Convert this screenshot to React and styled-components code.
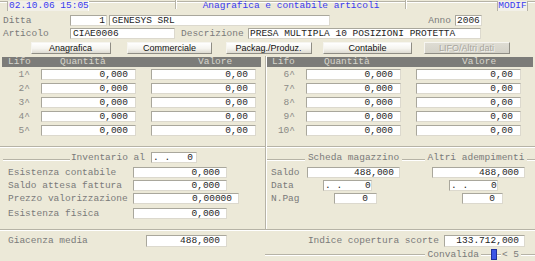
import React from 'react';
import styled, { createGlobalStyle } from 'styled-components';

const MONO = `"Liberation Mono", "DejaVu Sans Mono", monospace`;
const BLUE = '#3a3aef';
const ETCH_D = '#b6b3a6';
const ETCH_L = '#ffffff';

const Global = createGlobalStyle`
  html, body { margin: 0; padding: 0; background: #ece9d8; }
  #root { width: 535px; height: 261px; overflow: hidden; }
`;

const Screen = styled.div`
  width: 535px;
  height: 261px;
  background: #ece9d8;
  font-family: ${MONO};
  font-size: 9.5px;
  line-height: 1;
  color: #7a7a7a;
  display: flex;
  flex-direction: column;
  overflow: hidden;
`;

/* ---------- top strip ---------- */
const TopBar = styled.div`
  height: 14px;
  flex: none;
  display: flex;
  align-items: flex-start;
  background: linear-gradient(
    to bottom,
    transparent 0 1px,
    ${ETCH_D} 1px 2px,
    ${ETCH_L} 2px 3px,
    transparent 3px
  );
`;

const DateTag = styled.div`
  margin-left: 7px;
  margin-top: 1px;
  width: 82px;
  height: 10px;
  box-sizing: border-box;
  border-left: 1px solid ${ETCH_D};
  border-right: 1px solid ${ETCH_L};
  background: #f2f0e8;
  color: ${BLUE};
  padding-left: 1px;
  line-height: 10px;
  white-space: pre;
`;

const Tick = styled.div`
  flex: none;
  margin-left: ${p => p.$ml}px;
  width: 1px;
  height: 9px;
  background: ${ETCH_D};
  border-right: 1px solid ${ETCH_L};
`;

const Title = styled.div`
  flex: none;
  width: 228px;
  margin-top: 1px;
  text-align: center;
  color: ${BLUE};
  line-height: 10px;
  white-space: pre;
`;

const ModeTag = styled.div`
  flex: none;
  margin-left: 90px;
  margin-top: 1px;
  width: 31px;
  height: 10px;
  box-sizing: border-box;
  border-left: 1px solid ${ETCH_D};
  border-right: 1px solid ${ETCH_D};
  background: #f2f0e8;
  color: ${BLUE};
  text-align: center;
  line-height: 10px;
`;

/* ---------- fields ---------- */
const FieldRow = styled.div`
  height: 13px;
  flex: none;
  display: flex;
  align-items: center;
  padding-left: 3px;
  padding-right: 53px;
`;

const Label = styled.span`
  flex: none;
  width: ${p => (p.$w ? `${p.$w}px` : 'auto')};
  margin-left: ${p => p.$ml || 0}px;
  padding-left: ${p => p.$pl || 0}px;
  box-sizing: border-box;
  text-align: ${p => (p.$right ? 'right' : 'left')};
  color: #7a7a7a;
  white-space: pre;
`;

const Field = styled.div`
  flex: none;
  width: ${p => p.$w}px;
  height: ${p => p.$h || 11}px;
  margin-left: ${p => p.$ml || 0}px;
  box-sizing: border-box;
  background: #ffffff;
  border: 1px solid;
  border-color: #a9a79c #dcd9ce #dcd9ce #a9a79c;
  color: #1e1e1e;
  font-family: ${MONO};
  font-size: 9.5px;
  line-height: ${p => (p.$h || 11) - 2}px;
  text-align: ${p => (p.$left ? 'left' : 'right')};
  padding: 0 ${p => (p.$pr ?? 6)}px 0 ${p => (p.$pl ?? 1)}px;
  white-space: pre;
  overflow: hidden;
`;

const Spacer = styled.div`
  flex: 1;
`;

/* ---------- buttons ---------- */
const ButtonBar = styled.div`
  flex: none;
  margin-top: 2px;
  margin-left: 21px;
  height: 12px;
  display: grid;
  grid-template-columns: repeat(5, 99px);
  justify-items: center;
`;

const Button = styled.div`
  width: ${p => p.$w}px;
  height: 12px;
  box-sizing: border-box;
  border: 1px solid;
  border-color: #f6f5f0 #8f8d84 #8f8d84 #f6f5f0;
  background: ${p =>
    p.$disabled
      ? 'linear-gradient(#dedcd3, #d4d2c8)'
      : 'linear-gradient(#ffffff, #f5f4ef 55%, #dddbd1)'};
  color: ${p => (p.$disabled ? '#a8a69e' : '#101010')};
  text-shadow: ${p => (p.$disabled ? '1px 1px 0 #f4f3ee' : 'none')};
  font-family: "Liberation Sans", Arial, sans-serif;
  font-size: 9px;
  line-height: 10px;
  text-align: center;
  white-space: nowrap;
`;

/* ---------- middle panels ---------- */
const Middle = styled.div`
  flex: none;
  margin-top: 2px;
  height: 173px;
  display: flex;
`;

const Panel = styled.div`
  flex: none;
  width: ${p => p.$w}px;
  display: flex;
  flex-direction: column;
`;

const VSep = styled.div`
  flex: none;
  width: 1px;
  background: ${ETCH_D};
  border-right: 1px solid ${ETCH_L};
`;

const TableSection = styled.div`
  flex: none;
  height: 90px;
  box-sizing: border-box;
  padding-top: 1px;
  padding-left: ${p => p.$pl}px;
  display: flex;
  flex-direction: column;
`;

const TableHead = styled.div`
  flex: none;
  height: 10px;
  margin-right: ${p => p.$mr}px;
  padding-left: ${p => p.$pl}px;
  background: #7c7c79;
  color: #d8d6cd;
  display: flex;
  align-items: center;
  line-height: 10px;
`;

const HeadCell = styled.span`
  flex: none;
  width: ${p => (p.$w ? `${p.$w}px` : 'auto')};
  white-space: pre;
`;

const LifoRows = styled.div`
  margin-top: 2px;
  display: flex;
  flex-direction: column;
  gap: 3px;
`;

const LifoRow = styled.div`
  height: 11px;
  display: flex;
  align-items: center;
`;

const RowNo = styled.span`
  flex: none;
  width: 28px;
  text-align: right;
  color: #8a8a86;
  white-space: pre;
`;

const HLine = styled.div`
  flex: none;
  height: 0;
  border-top: 1px solid ${ETCH_D};
  border-bottom: 1px solid ${ETCH_L};
`;

const LowerSection = styled.div`
  flex: 1;
  display: flex;
  flex-direction: column;
`;

const GroupRow = styled.div`
  flex: none;
  margin-top: 4px;
  height: 12px;
  display: flex;
  align-items: flex-start;
`;

const GroupLine = styled.div`
  flex: ${p => (p.$w ? 'none' : '1')};
  width: ${p => (p.$w ? `${p.$w}px` : 'auto')};
  margin-left: ${p => p.$ml || 0}px;
  margin-top: 7px;
  height: 0;
  border-top: 1px solid ${ETCH_D};
  border-bottom: 1px solid ${ETCH_L};
`;

const GroupTitle = styled.span`
  flex: none;
  width: ${p => p.$w}px;
  margin-left: ${p => p.$ml || 0}px;
  text-align: ${p => p.$align || 'center'};
  line-height: 11px;
  color: #7a7a7a;
  white-space: pre;
`;

const FormRows = styled.div`
  margin-top: 3px;
  display: flex;
  flex-direction: column;
  gap: 2px;
`;

const FormRow = styled.div`
  height: 11px;
  margin-top: ${p => p.$mt || 0}px;
  display: flex;
  align-items: center;
  padding-left: ${p => p.$pl || 0}px;
`;

const Cell = styled.div`
  flex: none;
  width: ${p => p.$w}px;
  margin-left: ${p => p.$ml || 0}px;
  display: flex;
`;

/* ---------- bottom ---------- */
const Bottom = styled.div`
  flex: 1;
  display: flex;
`;

const BottomCol = styled.div`
  flex: none;
  width: ${p => p.$w}px;
  padding-top: 4px;
  display: flex;
  flex-direction: column;
`;

const BottomRow = styled.div`
  height: ${p => p.$h}px;
  margin-top: ${p => p.$mt || 0}px;
  display: flex;
  align-items: center;
  justify-content: ${p => (p.$end ? 'flex-end' : 'flex-start')};
  padding-left: ${p => p.$pl || 0}px;
  padding-right: ${p => p.$pr || 0}px;
`;

const StatusLine = styled.div`
  flex: ${p => (p.$w ? 'none' : '1')};
  width: ${p => (p.$w ? `${p.$w}px` : 'auto')};
  margin: 0 ${p => p.$mr || 0}px 0 ${p => p.$ml || 0}px;
  height: 0;
  border-top: 1px solid ${ETCH_D};
  border-bottom: 1px solid ${ETCH_L};
`;

const Cursor = styled.div`
  flex: none;
  width: 6px;
  height: 11px;
  box-sizing: border-box;
  background: #3b55e6;
  border: 1px solid #1f2f9c;
`;

const lifoLeft = [1, 2, 3, 4, 5];
const lifoRight = [6, 7, 8, 9, 10];

function LifoTable({ rows, left }) {
  return (
    <TableSection $pl={left ? 2 : 0}>
      <TableHead $mr={left ? 4 : 2} $pl={left ? 6 : 5}>
        <HeadCell $w={52}>Lifo</HeadCell>
        <HeadCell $w={138}>Quantità</HeadCell>
        <HeadCell>Valore</HeadCell>
      </TableHead>
      <LifoRows>
        {rows.map(n => (
          <LifoRow key={n}>
            <RowNo>{`${n}^`}</RowNo>
            <Field $w={95} $ml={11} $pr={7}>0,000</Field>
            <Field $w={105} $ml={15} $pr={7}>0,00</Field>
          </LifoRow>
        ))}
      </LifoRows>
    </TableSection>
  );
}

export default function App() {
  return (
    <>
      <Global />
      <Screen>
        <TopBar>
          <DateTag>02.10.06 15:05</DateTag>
          <Tick $ml={86} />
          <Title>Anagrafica e contabile articoli</Title>
          <Tick $ml={0} />
          <ModeTag>MODIF</ModeTag>
        </TopBar>

        <FieldRow>
          <Label $w={67}>Ditta</Label>
          <Field $w={37} $pr={1}>1</Field>
          <Field $w={221} $ml={2} $left $pl={2}>GENESYS SRL</Field>
          <Spacer />
          <Label>Anno</Label>
          <Field $w={27} $ml={4} $left $pl={1}>2006</Field>
        </FieldRow>
        <FieldRow>
          <Label $w={67}>Articolo</Label>
          <Field $w={105} $left $pl={2}>CIAE0006</Field>
          <Label $w={67} $ml={6}>Descrizione</Label>
          <Field $w={233} $left $pl={1}>PRESA MULTIPLA 10 POSIZIONI PROTETTA</Field>
        </FieldRow>

        <ButtonBar>
          <Button $w={80}>Anagrafica</Button>
          <Button $w={85}>Commerciale</Button>
          <Button $w={86}>Packag./Produz.</Button>
          <Button $w={89}>Contabile</Button>
          <Button $w={86} $disabled>LIFO/Altri dati</Button>
        </ButtonBar>

        <Middle>
          <Panel $w={265}>
            <LifoTable rows={lifoLeft} left />
            <HLine />
            <LowerSection>
              <GroupRow>
                <GroupLine $w={67} $ml={3} />
                <GroupTitle $w={75} $align="right">Inventario al</GroupTitle>
                <Field $w={46} $ml={6} $pr={3}>{'. .   0'}</Field>
              </GroupRow>
              <FormRows>
                <FormRow $pl={8}>
                  <Label $w={125}>Esistenza contabile</Label>
                  <Field $w={94} $pr={6}>0,000</Field>
                </FormRow>
                <FormRow $pl={8}>
                  <Label $w={125}>Saldo attesa fattura</Label>
                  <Field $w={94} $pr={6}>0,000</Field>
                </FormRow>
                <FormRow $pl={8}>
                  <Label $w={125}>Prezzo valorizzazione</Label>
                  <Field $w={106} $pr={6}>0,00000</Field>
                </FormRow>
                <FormRow $pl={8} $mt={2}>
                  <Label $w={125}>Esistenza fisica</Label>
                  <Field $w={94} $pr={6}>0,000</Field>
                </FormRow>
              </FormRows>
            </LowerSection>
          </Panel>
          <VSep />
          <Panel $w={268}>
            <LifoTable rows={lifoRight} />
            <HLine />
            <LowerSection>
              <GroupRow>
                <GroupLine $w={38} />
                <GroupTitle $w={95} $ml={1}>Scheda magazzino</GroupTitle>
                <GroupLine $w={23} $ml={1} />
                <GroupTitle $w={100} $ml={1}>Altri adempimenti</GroupTitle>
                <GroupLine $ml={1} />
              </GroupRow>
              <FormRows>
                <FormRow $pl={4}>
                  <Label $w={36}>Saldo</Label>
                  <Cell $w={93}><Field $w={93} $pr={5}>488,000</Field></Cell>
                  <Cell $w={93} $ml={32}><Field $w={93} $pr={5}>488,000</Field></Cell>
                </FormRow>
                <FormRow $pl={4}>
                  <Label $w={36}>Data</Label>
                  <Cell $w={93}><Field $w={49} $ml={16} $pr={4}>{'. .    0'}</Field></Cell>
                  <Cell $w={93} $ml={32}><Field $w={49} $ml={17} $pr={4}>{'. .    0'}</Field></Cell>
                </FormRow>
                <FormRow $pl={4}>
                  <Label $w={36}>N.Pag</Label>
                  <Cell $w={93}><Field $w={43} $ml={27} $pr={8}>0</Field></Cell>
                  <Cell $w={93} $ml={32}><Field $w={41} $ml={30} $pr={7}>0</Field></Cell>
                </FormRow>
              </FormRows>
            </LowerSection>
          </Panel>
        </Middle>

        <HLine />

        <Bottom>
          <BottomCol $w={265}>
            <BottomRow $h={12} $pl={8}>
              <Label $w={138}>Giacenza media</Label>
              <Field $w={81} $h={12} $pr={6}>488,000</Field>
            </BottomRow>
          </BottomCol>
          <BottomCol $w={270}>
            <BottomRow $h={12} $end $pr={10}>
              <Label>Indice copertura scorte</Label>
              <Field $w={81} $h={12} $ml={5} $pr={5}>133.712,000</Field>
            </BottomRow>
            <BottomRow $h={11} $mt={2}>
              <StatusLine $mr={3} />
              <Label>Convalida</Label>
              <StatusLine $w={10} $ml={2} />
              <Cursor />
              <StatusLine $w={4} />
              <Label $ml={1}>{'< 5'}</Label>
              <StatusLine $w={14} $ml={2} />
            </BottomRow>
          </BottomCol>
        </Bottom>
      </Screen>
    </>
  );
}
